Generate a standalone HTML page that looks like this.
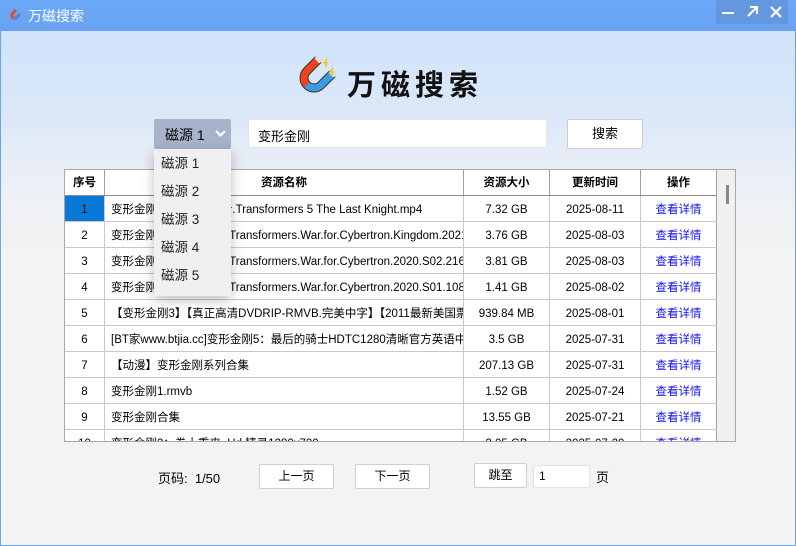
<!DOCTYPE html>
<html><head><meta charset="utf-8"><style>
*{margin:0;padding:0;box-sizing:border-box}
body{width:796px;height:546px;overflow:hidden;font-family:"Liberation Sans","Noto Sans CJK SC",sans-serif;font-size:12px;color:#000;position:relative;background:#f3f3f3}
.win{position:absolute;left:0;top:0;width:796px;height:546px;border:1px solid #6aa6ee;border-top:none;background:linear-gradient(#cde1fc 0px,#dce8f8 120px,#ecf0f6 180px,#f3f3f3 260px)}
.tb{position:absolute;left:0;top:0;width:796px;height:31px;background:linear-gradient(#69a9f8,#6aa2f2)}
.tb .t{position:absolute;left:28px;top:6px;color:#fff;font-size:14px}
.ctl{position:absolute;left:716px;top:0;width:72px;height:24px;background:#6497de}
.abs{position:absolute}
.btn{position:absolute;background:#fff;border:1px solid #cfcfcf;border-radius:2px;text-align:center;font-size:12px}
.tbl{position:absolute;left:64px;top:169px;width:672px;height:273px;border:1px solid #a8a8a8;background:#fff;overflow:hidden}
.r{position:absolute;left:0;width:652px;height:26px;border-bottom:1px solid #c8c8c8}
.c{position:absolute;top:0;height:25px;line-height:28px;border-right:1px solid #c8c8c8;white-space:nowrap;overflow:hidden;font-size:11.5px}
.c0{left:0;width:40px;text-align:center}
.c1{left:40px;width:359px;padding-left:6px}
.c2{left:399px;width:86px;text-align:center}
.c3{left:485px;width:91px;text-align:center}
.c4{left:576px;width:76px;text-align:center;color:#1010ee;border-right:1px solid #a0a0a0}
.h .c{font-weight:bold;border-right-color:#a0a0a0;line-height:27px}
.h{border-bottom-color:#8c8c8c}
.dd{position:absolute;left:154px;top:149px;width:77px;height:147px;background:#f0f0f0;box-shadow:0 4px 12px rgba(0,0,0,.25)}
.dd div{height:28px;line-height:30px;padding-left:7px;font-size:13.5px;color:#222}
</style></head><body>
<div class="win"></div>
<div class="tb">
<svg class="abs" style="left:7px;top:7px" width="16" height="16" viewBox="0 0 16 16"><path d="M9 3 L5 7 A3 3 0 0 0 9 11 L13 7" fill="none" stroke="#e84a1e" stroke-width="3"/><path d="M7 9.5 A3 3 0 0 0 9 11 L13 7" fill="none" stroke="#3b8fe0" stroke-width="3"/></svg>
<div class="t">万磁搜索</div>
<div class="ctl">
<div class="abs" style="left:6px;top:12px;width:12px;height:2px;background:#fff"></div>
<svg class="abs" style="left:30px;top:5px" width="13" height="13" viewBox="0 0 13 13"><path d="M2 11 L11 2 M4 2 H11 V9" fill="none" stroke="#fff" stroke-width="2"/></svg>
<svg class="abs" style="left:54px;top:6px" width="12" height="12" viewBox="0 0 12 12"><path d="M1 1 L11 11 M11 1 L1 11" stroke="#fff" stroke-width="2"/></svg>
</div>
</div>
<svg class="abs" style="left:294px;top:56px" width="42" height="42" viewBox="0 0 42 42">
<g transform="rotate(45 20 22)">
<path d="M10 6 V22 A10 10 0 0 0 30 22 V6" fill="none" stroke="#333" stroke-width="9"/>
<path d="M10 8 V22 A10 10 0 0 0 20 32" fill="none" stroke="#f0431d" stroke-width="7"/>
<path d="M20 32 A10 10 0 0 0 30 22 V8" fill="none" stroke="#3a9ce6" stroke-width="7"/>
<rect x="6.5" y="3" width="7" height="5" fill="#ddd"/><rect x="26.5" y="3" width="7" height="5" fill="#ddd"/>
</g>
<path d="M33 3 l-3 4 h3 l-2 4" fill="none" stroke="#f5c518" stroke-width="1.5"/>
<path d="M39 12 l-3 4 h3 l-2 4" fill="none" stroke="#f5c518" stroke-width="1.5"/>
</svg>
<div class="abs" style="left:347px;top:62px;font-size:29px;font-weight:bold;letter-spacing:5px;color:#111">万磁搜索</div>
<div class="abs" style="left:154px;top:119px;width:77px;height:30px;background:#a6b3cb;border-radius:2px"><span class="abs" style="left:11px;top:6px;font-size:14px">磁源 1</span>
<svg class="abs" style="left:61px;top:11px" width="11" height="8" viewBox="0 0 11 8"><path d="M1 1 L5.5 5.5 L10 1" fill="none" stroke="#fff" stroke-width="2"/></svg></div>
<div class="abs" style="left:248px;top:119px;width:299px;height:29px;background:#fff;border:1px solid #e4e4e4"><span class="abs" style="left:9px;top:6px;font-size:13px">变形金刚</span></div>
<div class="btn" style="left:567px;top:119px;width:76px;height:30px;line-height:28px;font-size:13px">搜索</div>
<div class="tbl">
<div class="r h" style="top:0"><div class="c c0">序号</div><div class="c c1" style="text-align:center;padding:0">资源名称</div><div class="c c2">资源大小</div><div class="c c3">更新时间</div><div class="c c4" style="color:#000">操作</div></div>
<div class="r" style="top:26px"><div class="c c0" style="background:#0a78d7;color:#111">1</div><div class="c c1">变形金刚5：最后的骑士.Transformers 5 The Last Knight.mp4</div><div class="c c2">7.32 GB</div><div class="c c3">2025-08-11</div><div class="c c4">查看详情</div></div>
<div class="r" style="top:52px"><div class="c c0">2</div><div class="c c1">变形金刚：塞伯坦之战.Transformers.War.for.Cybertron.Kingdom.2021</div><div class="c c2">3.76 GB</div><div class="c c3">2025-08-03</div><div class="c c4">查看详情</div></div>
<div class="r" style="top:78px"><div class="c c0">3</div><div class="c c1">变形金刚：塞伯坦之战.Transformers.War.for.Cybertron.2020.S02.2160p</div><div class="c c2">3.81 GB</div><div class="c c3">2025-08-03</div><div class="c c4">查看详情</div></div>
<div class="r" style="top:104px"><div class="c c0">4</div><div class="c c1">变形金刚：塞伯坦之战.Transformers.War.for.Cybertron.2020.S01.1080p</div><div class="c c2">1.41 GB</div><div class="c c3">2025-08-02</div><div class="c c4">查看详情</div></div>
<div class="r" style="top:130px"><div class="c c0">5</div><div class="c c1">【变形金刚3】【真正高清DVDRIP-RMVB.完美中字】【2011最新美国票房</div><div class="c c2">939.84 MB</div><div class="c c3">2025-08-01</div><div class="c c4">查看详情</div></div>
<div class="r" style="top:156px"><div class="c c0">6</div><div class="c c1">[BT家www.btjia.cc]变形金刚5：最后的骑士HDTC1280清晰官方英语中字</div><div class="c c2">3.5 GB</div><div class="c c3">2025-07-31</div><div class="c c4">查看详情</div></div>
<div class="r" style="top:182px"><div class="c c0">7</div><div class="c c1">【动漫】变形金刚系列合集</div><div class="c c2">207.13 GB</div><div class="c c3">2025-07-31</div><div class="c c4">查看详情</div></div>
<div class="r" style="top:208px"><div class="c c0">8</div><div class="c c1">变形金刚1.rmvb</div><div class="c c2">1.52 GB</div><div class="c c3">2025-07-24</div><div class="c c4">查看详情</div></div>
<div class="r" style="top:234px"><div class="c c0">9</div><div class="c c1">变形金刚合集</div><div class="c c2">13.55 GB</div><div class="c c3">2025-07-21</div><div class="c c4">查看详情</div></div>
<div class="r" style="top:260px"><div class="c c0">10</div><div class="c c1">变形金刚2：卷土重来 .Hd.精录1280x720</div><div class="c c2">2.05 GB</div><div class="c c3">2025-07-20</div><div class="c c4">查看详情</div></div>
<div class="abs" style="left:652px;top:0;width:19px;height:273px;background:#f0f0f0"><div class="abs" style="left:9px;top:15px;width:3px;height:19px;background:#888"></div></div>
</div>
<div class="dd"><div>磁源 1</div><div>磁源 2</div><div>磁源 3</div><div>磁源 4</div><div>磁源 5</div></div>
<div class="abs" style="left:158px;top:468px;font-size:13px">页码:&nbsp;&nbsp;1/50</div>
<div class="btn" style="left:259px;top:464px;width:75px;height:25px;line-height:23px">上一页</div>
<div class="btn" style="left:355px;top:464px;width:75px;height:25px;line-height:23px">下一页</div>
<div class="btn" style="left:474px;top:463px;width:53px;height:25px;line-height:23px">跳至</div>
<div class="abs" style="left:533px;top:465px;width:57px;height:23px;background:#fff;border:1px solid #e4e4e4"><span class="abs" style="left:5px;top:3px;font-size:12px">1</span></div>
<div class="abs" style="left:596px;top:467px;font-size:13px">页</div>
</body></html>
